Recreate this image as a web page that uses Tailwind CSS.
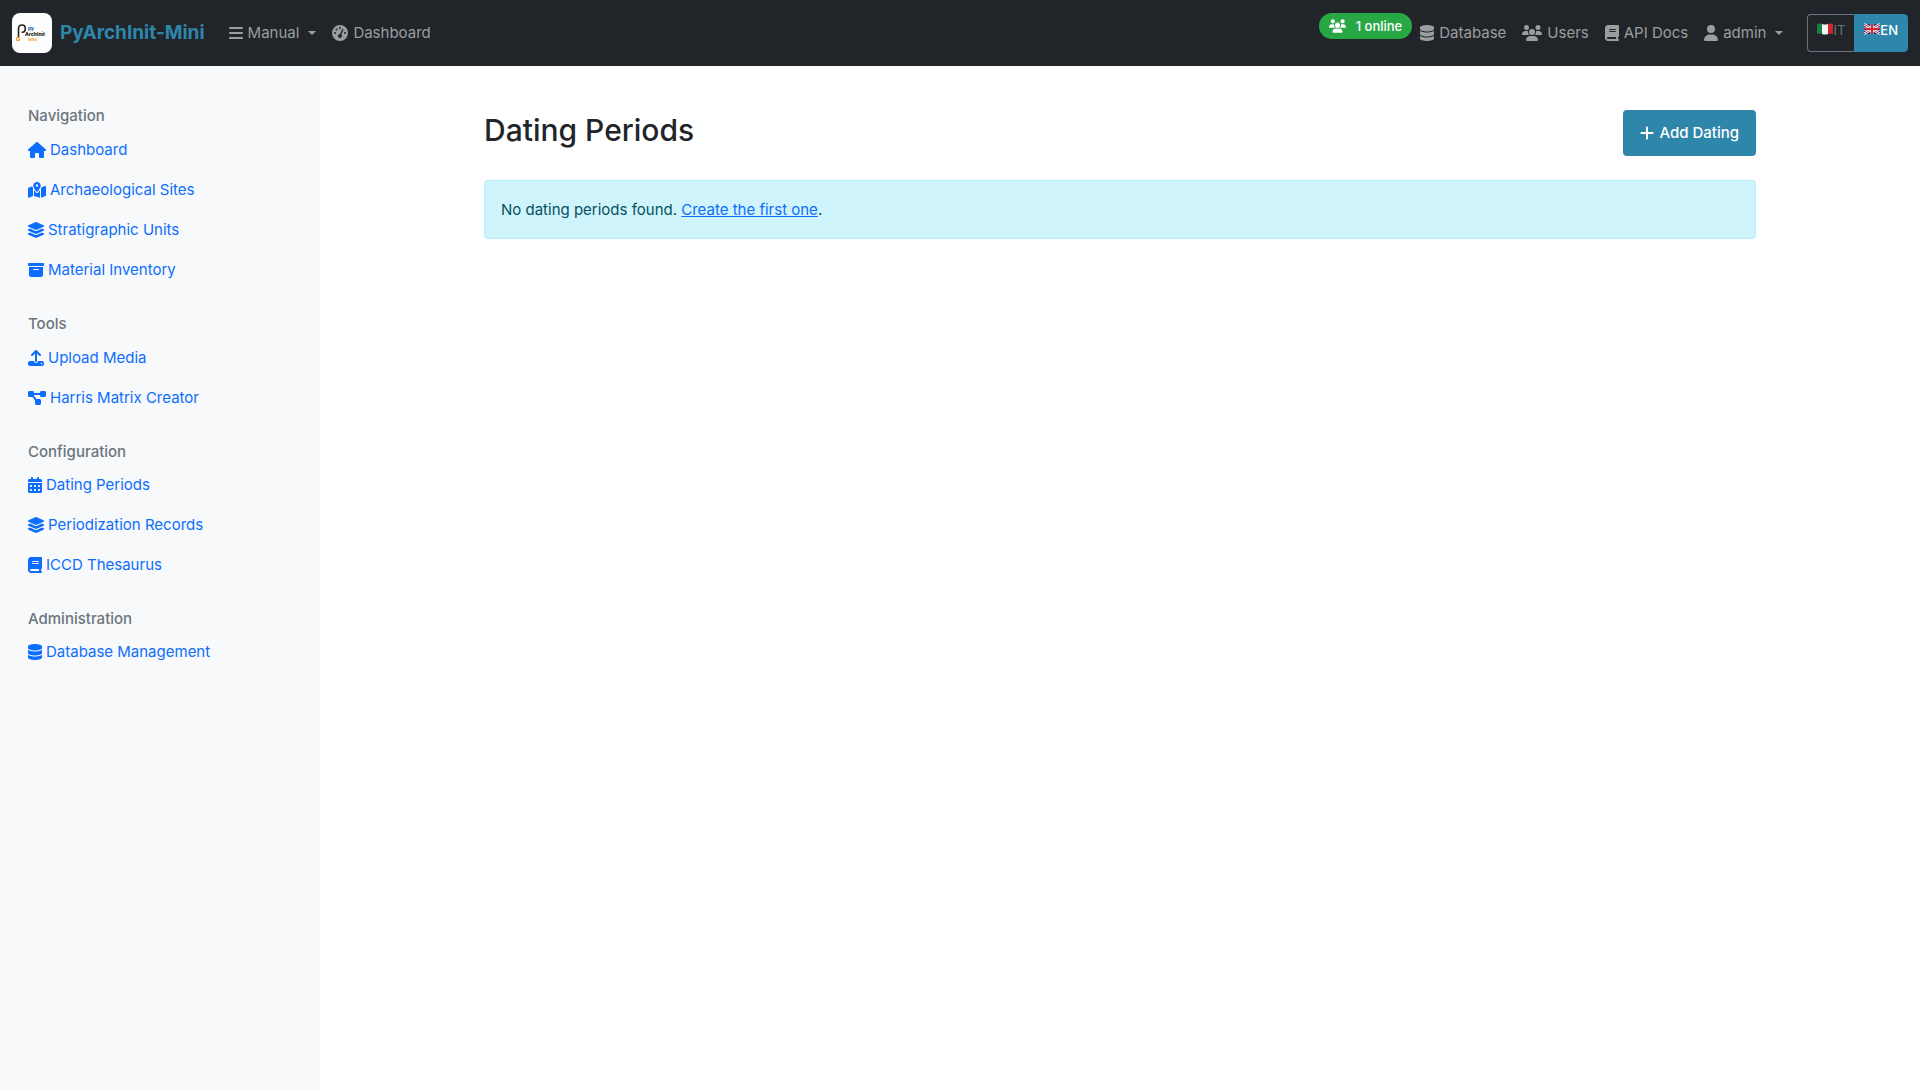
<!DOCTYPE html>
<html lang="en">
<head>
<meta charset="utf-8">
<meta name="viewport" content="width=device-width, initial-scale=1">
<title>Dating Periods - PyArchInit-Mini</title>
<script src="https://cdn.jsdelivr.net/npm/@tailwindcss/browser@4"></script>
</head>
<body class="flex min-h-screen flex-col bg-white font-['Inter',sans-serif] text-[15px] leading-6 text-[#212529]">

<svg class="hidden" aria-hidden="true">
  <symbol id="bars" viewBox="0 0 448 512"><path d="M0 96C0 78.300 14.300 64 32 64H416c17.700 0 32 14.300 32 32s-14.300 32-32 32H32C14.300 128 0 113.700 0 96zM0 256c0-17.700 14.300-32 32-32H416c17.700 0 32 14.300 32 32s-14.300 32-32 32H32c-17.700 0-32-14.300-32-32zM448 416c0 17.700-14.300 32-32 32H32c-17.700 0-32-14.300-32-32s14.300-32 32-32H416c17.700 0 32 14.300 32 32z"/></symbol>
  <symbol id="gauge" viewBox="0 0 512 512"><path d="M0 256a256 256 0 1 1 512 0A256 256 0 1 1 0 256zM288 96a32 32 0 1 0 -64 0 32 32 0 1 0 64 0zM256 416c35.300 0 64-28.700 64-64c0-17.400-6.900-33.100-18.100-44.600L366 161.700c5.300-12.100-.2-26.300-12.300-31.600s-26.300 .2-31.600 12.300L257.900 288c-.6 0-1.300 0-1.900 0c-35.300 0-64 28.700-64 64s28.700 64 64 64zM176 144a32 32 0 1 0 -64 0 32 32 0 1 0 64 0zM96 288a32 32 0 1 0 0-64 32 32 0 1 0 0 64zm352-32a32 32 0 1 0 -64 0 32 32 0 1 0 64 0z"/></symbol>
  <symbol id="users" viewBox="0 0 640 512"><path d="M144 0a80 80 0 1 1 0 160A80 80 0 1 1 144 0zM512 0a80 80 0 1 1 0 160A80 80 0 1 1 512 0zM0 298.700C0 239.800 47.800 192 106.700 192h42.700c15.900 0 31 3.500 44.600 9.700c-1.300 7.200-1.900 14.700-1.900 22.300c0 38.200 16.800 72.500 43.300 96c-.2 0-.4 0-.7 0H21.300C9.600 320 0 310.400 0 298.700zM405.300 320c-.2 0-.4 0-.7 0c26.600-23.500 43.300-57.800 43.300-96c0-7.600-.7-15-1.900-22.300c13.600-6.300 28.700-9.700 44.600-9.700h42.700C592.200 192 640 239.800 640 298.700c0 11.800-9.600 21.300-21.300 21.300H405.300zM224 224a96 96 0 1 1 192 0 96 96 0 1 1 -192 0zM128 485.300C128 411.700 187.700 352 261.300 352H378.700C452.300 352 512 411.700 512 485.300c0 14.700-11.900 26.700-26.700 26.700H154.700c-14.700 0-26.700-11.900-26.700-26.700z"/></symbol>
  <symbol id="database" viewBox="0 0 448 512"><path d="M448 80v48c0 44.200-100.300 80-224 80S0 172.200 0 128V80C0 35.800 100.300 0 224 0S448 35.800 448 80zM393.200 214.700c20.800-7.400 39.900-16.900 54.800-28.600V288c0 44.200-100.300 80-224 80S0 332.200 0 288V186.100c14.900 11.800 34 21.200 54.800 28.600C99.700 230.700 159.500 240 224 240s124.300-9.300 169.200-25.300zM0 346.100c14.900 11.800 34 21.200 54.800 28.600C99.700 390.700 159.500 400 224 400s124.300-9.300 169.200-25.300c20.800-7.400 39.900-16.900 54.800-28.600V432c0 44.200-100.300 80-224 80S0 476.200 0 432V346.100z"/></symbol>
  <symbol id="book" viewBox="0 0 448 512"><path d="M96 0C43 0 0 43 0 96V416c0 53 43 96 96 96H384h32c17.700 0 32-14.300 32-32s-14.300-32-32-32V384c17.700 0 32-14.300 32-32V32c0-17.700-14.300-32-32-32H384 96zm0 384H352v64H96c-17.700 0-32-14.300-32-32s14.300-32 32-32zm32-240c0-8.800 7.200-16 16-16H336c8.800 0 16 7.200 16 16s-7.200 16-16 16H144c-8.800 0-16-7.200-16-16zm16 48H336c8.800 0 16 7.200 16 16s-7.200 16-16 16H144c-8.800 0-16-7.200-16-16s7.200-16 16-16z"/></symbol>
  <symbol id="user" viewBox="0 0 448 512"><path d="M224 256A128 128 0 1 0 224 0a128 128 0 1 0 0 256zm-45.700 48C79.800 304 0 383.800 0 482.300C0 498.700 13.300 512 29.700 512H418.300c16.400 0 29.700-13.300 29.700-29.700C448 383.800 368.200 304 269.700 304H178.300z"/></symbol>
  <symbol id="house" viewBox="0 0 576 512"><path d="M575.800 255.500c0 18-15 32.100-32 32.100h-32l.7 160.200c0 2.700-.2 5.400-.5 8.100V472c0 22.100-17.900 40-40 40H456c-1.100 0-2.200 0-3.300-.1c-1.400 .1-2.800 .1-4.200 .1H416 392c-22.100 0-40-17.900-40-40V448 384c0-17.700-14.300-32-32-32H256c-17.700 0-32 14.300-32 32v64 24c0 22.100-17.900 40-40 40H160 128.100c-1.500 0-3-.1-4.500-.2c-1.200 .1-2.400 .2-3.600 .2H104c-22.100 0-40-17.900-40-40V360c0-.9 0-1.900 .1-2.800V287.600H32c-18 0-32-14-32-32.100c0-9 3-17 10-24L266.400 8c7-7 15-8 22-8s15 2 21 7L564.800 231.500c8 7 12 15 11 24z"/></symbol>
  <symbol id="map" viewBox="0 0 576 512"><path d="M408 120c0 54.600-73.100 151.900-105.200 192c-7.700 9.600-22 9.600-29.600 0C241.100 271.900 168 174.600 168 120C168 53.700 221.700 0 288 0s120 53.700 120 120zm8 80.400c3.500-6.900 6.700-13.800 9.600-20.600c.5-1.200 1-2.500 1.500-3.700l116-46.400C558.900 123.400 576 135 576 152V422.800c0 9.800-6 18.600-15.100 22.300L416 503V200.400zM137.600 138.300c2.400 14.100 7.200 28.300 12.800 41.500c2.900 6.800 6.100 13.700 9.600 20.600V451.800L32.900 502.700C17.100 509 0 497.400 0 480.400V209.600c0-9.800 6-18.600 15.100-22.300l122.600-49zM327.800 332c13.900-17.400 35.700-45.700 56.200-77V504.300L192 449.400V255c20.500 31.300 42.300 59.600 56.200 77c20.500 25.600 59.100 25.600 79.600 0zM288 152a40 40 0 1 0 0-80 40 40 0 1 0 0 80z"/></symbol>
  <symbol id="layers" viewBox="32 0 512 512"><path d="M264.500 5.200c14.900-6.900 32.100-6.900 47 0l218.600 101c8.500 3.900 13.900 12.400 13.900 21.800s-5.400 17.900-13.900 21.800l-218.600 101c-14.900 6.900-32.100 6.900-47 0L45.900 149.800C37.400 145.800 32 137.300 32 128s5.400-17.900 13.900-21.800L264.500 5.200zM476.900 209.600l53.200 24.600c8.500 3.900 13.900 12.400 13.900 21.800s-5.400 17.900-13.900 21.800l-218.600 101c-14.900 6.900-32.100 6.900-47 0L45.900 277.800C37.400 273.800 32 265.300 32 256s5.400-17.900 13.900-21.800l53.200-24.600 152 70.200c23.400 10.800 50.400 10.800 73.800 0l152-70.200zm-152 198.200l152-70.200 53.200 24.600c8.500 3.900 13.900 12.400 13.900 21.800s-5.400 17.900-13.900 21.800l-218.600 101c-14.900 6.900-32.100 6.900-47 0L45.900 405.800C37.400 401.800 32 393.300 32 384s5.400-17.900 13.900-21.800l53.200-24.600 152 70.200c23.400 10.800 50.400 10.800 73.800 0z"/></symbol>
  <symbol id="archive" viewBox="0 0 512 512"><path d="M32 32H480c17.700 0 32 14.300 32 32V96c0 17.700-14.300 32-32 32H32C14.300 128 0 113.700 0 96V64C0 46.300 14.300 32 32 32zm0 128H480V416c0 35.300-28.700 64-64 64H96c-35.300 0-64-28.700-64-64V160zm128 80c0 8.800 7.200 16 16 16H336c8.800 0 16-7.200 16-16s-7.200-16-16-16H176c-8.800 0-16 7.200-16 16z"/></symbol>
  <symbol id="upload" viewBox="0 0 512 512"><path d="M288 109.300V352c0 17.700-14.300 32-32 32s-32-14.300-32-32V109.300l-73.400 73.400c-12.500 12.500-32.800 12.500-45.300 0s-12.500-32.800 0-45.300l128-128c12.500-12.500 32.800-12.500 45.300 0l128 128c12.500 12.500 12.500 32.800 0 45.300s-32.800 12.500-45.300 0L288 109.300zM64 352H192c0 35.300 28.700 64 64 64s64-28.700 64-64H448c35.300 0 64 28.700 64 64v32c0 35.300-28.700 64-64 64H64c-35.300 0-64-28.700-64-64V416c0-35.300 28.700-64 64-64zM432 456a24 24 0 1 0 0-48 24 24 0 1 0 0 48z"/></symbol>
  <symbol id="diagram" viewBox="0 0 576 512"><path d="M0 80C0 53.500 21.500 32 48 32h96c26.500 0 48 21.500 48 48V96H384V80c0-26.500 21.500-48 48-48h96c26.500 0 48 21.500 48 48v96c0 26.500-21.500 48-48 48H432c-26.500 0-48-21.500-48-48V160H192v16c0 1.700-.1 3.400-.3 5L272 288h96c26.500 0 48 21.500 48 48v96c0 26.500-21.500 48-48 48H272c-26.500 0-48-21.500-48-48V336c0-1.700 .1-3.400 .3-5L144 224H48c-26.500 0-48-21.500-48-48V80z"/></symbol>
  <symbol id="calendar" viewBox="0 0 448 512"><path d="M128 0c17.700 0 32 14.300 32 32V64H288V32c0-17.700 14.300-32 32-32s32 14.300 32 32V64h48c26.500 0 48 21.500 48 48v48H0V112C0 85.500 21.500 64 48 64H96V32c0-17.700 14.300-32 32-32zM0 192H448V464c0 26.500-21.500 48-48 48H48c-26.500 0-48-21.500-48-48V192zm64 80v32c0 8.800 7.200 16 16 16h32c8.800 0 16-7.200 16-16V272c0-8.800-7.200-16-16-16H80c-8.800 0-16 7.200-16 16zm128 0v32c0 8.800 7.200 16 16 16h32c8.800 0 16-7.200 16-16V272c0-8.800-7.200-16-16-16H208c-8.800 0-16 7.200-16 16zm144-16c-8.800 0-16 7.200-16 16v32c0 8.800 7.200 16 16 16h32c8.800 0 16-7.200 16-16V272c0-8.800-7.200-16-16-16H336zM64 400v32c0 8.800 7.200 16 16 16h32c8.800 0 16-7.200 16-16V400c0-8.800-7.200-16-16-16H80c-8.800 0-16 7.200-16 16zm144-16c-8.800 0-16 7.200-16 16v32c0 8.800 7.200 16 16 16h32c8.800 0 16-7.200 16-16V400c0-8.800-7.200-16-16-16H208zm112 16v32c0 8.800 7.200 16 16 16h32c8.800 0 16-7.200 16-16V400c0-8.800-7.200-16-16-16H336c-8.800 0-16 7.200-16 16z"/></symbol>
  <symbol id="plus" viewBox="0 0 448 512"><path d="M256 80c0-17.700-14.300-32-32-32s-32 14.300-32 32V224H48c-17.700 0-32 14.300-32 32s14.300 32 32 32H192V432c0 17.700 14.300 32 32 32s32-14.300 32-32V288H400c17.700 0 32-14.300 32-32s-14.300-32-32-32H256V80z"/></symbol>
  <symbol id="caret" viewBox="0 0 8 4"><path d="M0 0h8L4 4z"/></symbol>
</svg>

<nav class="flex items-center bg-[#212529] px-3 py-[13px] text-[#9b9d9e]" aria-label="Main">
  <a href="#" class="mr-4 flex items-center gap-2 text-[19px] leading-[30px] font-bold text-[#2e86ab]">
    <svg class="size-10" viewBox="0 0 40 40" role="img" aria-label="PyArchInit logo">
      <rect width="40" height="40" rx="8" fill="#fdfdfd"/>
      <path d="M6.500 24V16c0-2.500 1.400-4 3.500-4s3.300 1.500 3.300 3.600-1.300 3.700-3.100 3.700" fill="none" stroke="#222" stroke-width="1.600" stroke-linecap="round"/>
      <circle cx="6" cy="26" r="1.600" fill="none" stroke="#f39c2d" stroke-width="1.200"/>
      <text x="16" y="17" font-size="5" font-weight="800" fill="#2a6ebb">py</text>
      <text x="13" y="23" font-size="5" font-weight="800" fill="#222">ArchInit</text>
      <text x="16" y="28" font-size="4" font-weight="600" fill="#f39c2d">MINI</text>
    </svg>
    PyArchInit-Mini
  </a>
  <ul class="flex">
    <li><a href="#" class="flex items-center gap-[5px] px-2"><svg class="h-4 w-[14px] fill-current"><use href="#bars"/></svg>Manual<svg class="ml-1 h-1 w-2 fill-current"><use href="#caret"/></svg></a></li>
    <li><a href="#" class="flex items-center gap-[5px] px-2"><svg class="size-4 fill-current"><use href="#gauge"/></svg>Dashboard</a></li>
  </ul>
  <ul class="ml-auto flex items-center self-stretch">
    <li class="self-start"><span class="flex h-[26px] items-center gap-[10px] rounded-full bg-[#28a745] px-[10px] text-[13px] font-medium text-white"><svg class="h-[14px] w-[17px] fill-current"><use href="#users"/></svg>1 online</span></li>
    <li><a href="#" class="flex items-center gap-[5px] px-2"><svg class="h-4 w-[14px] fill-current"><use href="#database"/></svg>Database</a></li>
    <li><a href="#" class="flex items-center gap-[5px] px-2"><svg class="h-4 w-5 fill-current"><use href="#users"/></svg>Users</a></li>
    <li><a href="#" class="flex items-center gap-[5px] px-2"><svg class="h-4 w-[14px] fill-current"><use href="#book"/></svg>API Docs</a></li>
    <li><a href="#" class="flex items-center gap-[5px] px-2"><svg class="h-4 w-[14px] fill-current"><use href="#user"/></svg>admin<svg class="ml-1 h-1 w-2 fill-current"><use href="#caret"/></svg></a></li>
  </ul>
  <div class="ml-4 flex h-[38px] text-[13px] leading-5" role="group" aria-label="Language">
    <a href="#" class="flex items-start rounded-l border border-r-0 border-[#6c757d] px-[9px] pt-[5px] text-[#6c757d]">
      <svg class="mt-[3px] h-3 w-4" viewBox="0 0 16 12" aria-hidden="true"><path fill="#15803d" d="M0 1q3-1 6 0v10q-3-1-6 0z"/><path fill="#f4f4f4" d="M5 1q3 1 6 0v10q-3 1-6 0z"/><path fill="#d1242f" d="M11 1q3-1 5 0v10q-2-1-5 0z"/></svg>IT</a>
    <a href="#" class="flex items-start rounded-r border border-[#2e86ab] bg-[#2e86ab] px-[9px] pt-[5px] font-medium text-white" aria-current="true">
      <svg class="mt-[3px] h-3 w-4" viewBox="0 0 16 12" aria-hidden="true"><path fill="#1e3a8a" d="M0 1h16v10H0z"/><path stroke="#fff" stroke-width="2.400" d="M0 1l16 10M16 1L0 11"/><path stroke="#d1242f" stroke-width="1" d="M0 1l16 10M16 1L0 11"/><path stroke="#fff" stroke-width="3" d="M8 1v10M0 6h16"/><path stroke="#d1242f" stroke-width="2" d="M8 1v10M0 6h16"/></svg>EN</a>
  </div>
</nav>

<div class="flex grow">
  <aside class="flex w-1/6 shrink-0 flex-col gap-6 bg-[#f8f9fa] px-7 pt-10 text-[#0d6efd]">
    <section>
      <h2 class="mb-1 leading-5 font-medium text-[#6c757d]">Navigation</h2>
      <a href="#" class="flex items-center gap-1 py-2"><svg class="h-4 w-[18px] fill-current"><use href="#house"/></svg>Dashboard</a>
      <a href="#" class="flex items-center gap-1 py-2"><svg class="h-4 w-[18px] fill-current"><use href="#map"/></svg>Archaeological Sites</a>
      <a href="#" class="flex items-center gap-1 py-2"><svg class="size-4 fill-current"><use href="#layers"/></svg>Stratigraphic Units</a>
      <a href="#" class="flex items-center gap-1 py-2"><svg class="size-4 fill-current"><use href="#archive"/></svg>Material Inventory</a>
    </section>
    <section>
      <h2 class="mb-1 leading-5 font-medium text-[#6c757d]">Tools</h2>
      <a href="#" class="flex items-center gap-1 py-2"><svg class="size-4 fill-current"><use href="#upload"/></svg>Upload Media</a>
      <a href="#" class="flex items-center gap-1 py-2"><svg class="h-4 w-[18px] fill-current"><use href="#diagram"/></svg>Harris Matrix Creator</a>
    </section>
    <section>
      <h2 class="mb-1 leading-[19px] font-medium text-[#6c757d]">Configuration</h2>
      <a href="#" class="flex items-center gap-1 py-2"><svg class="h-4 w-[14px] fill-current"><use href="#calendar"/></svg>Dating Periods</a>
      <a href="#" class="flex items-center gap-1 py-2"><svg class="size-4 fill-current"><use href="#layers"/></svg>Periodization Records</a>
      <a href="#" class="flex items-center gap-1 py-2"><svg class="h-4 w-[14px] fill-current"><use href="#book"/></svg>ICCD Thesaurus</a>
    </section>
    <section>
      <h2 class="mb-1 leading-[19px] font-medium text-[#6c757d]">Administration</h2>
      <a href="#" class="flex items-center gap-1 py-2"><svg class="h-4 w-[14px] fill-current"><use href="#database"/></svg>Database Management</a>
    </section>
  </aside>

  <main class="min-w-0 grow">
    <div class="mx-auto max-w-[1320px] px-6 pt-11">
      <div class="mb-6 flex items-start justify-between">
        <h1 class="text-[30px] leading-10 font-medium">Dating Periods</h1>
        <a href="#" class="flex h-[46px] items-center gap-[5px] rounded bg-[#2e86ab] px-[17px] font-medium text-white"><svg class="h-4 w-[14px] fill-current"><use href="#plus"/></svg>Add Dating</a>
      </div>
      <div class="rounded border border-[#b6effb] bg-[#cff4fc] px-4 pt-[17px] pb-4 text-[#055160]" role="alert">No dating periods found. <a href="#" class="text-[#0d6efd] underline">Create the first one</a>.</div>
    </div>
  </main>
</div>
</body>
</html>
